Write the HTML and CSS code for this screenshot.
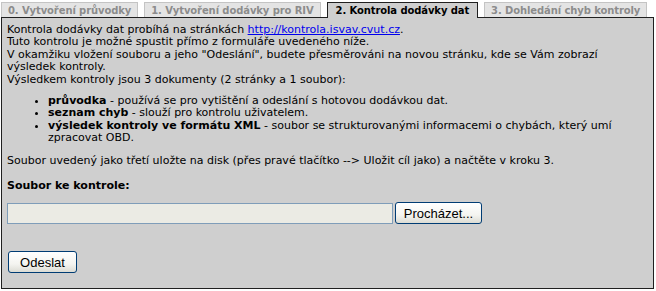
FILE: index.html
```html
<!DOCTYPE html>
<html lang="cs">
  <head>
    <meta charset="UTF-8" />
    <title>Kontrola dodávky dat</title>
    <link rel="stylesheet" href="styles.css">
  </head>
  <body>
    <div class="wizard">
      <ul class="tabs">
        <li class="tab">0. Vytvoření průvodky</li>
        <li class="tab">1. Vytvoření dodávky pro RIV</li>
        <li class="tab active">2. Kontrola dodávky dat</li>
        <li class="tab">3. Dohledání chyb kontroly</li>
      </ul>
      <div class="panel">
        <p class="intro">
          Kontrola dodávky dat probíhá na stránkách <a href="#">http://kontrola.isvav.cvut.cz</a>.<br />
          Tuto kontrolu je možné spustit přímo z formuláře uvedeného níže.<br />
          V okamžiku vložení souboru a jeho "Odeslání", budete přesměrováni na novou stránku, kde se Vám zobrazí
          výsledek kontroly.<br />
          Výsledkem kontroly jsou 3 dokumenty (2 stránky a 1 soubor):
        </p>
        <ul class="docs">
          <li><b>průvodka</b> - používá se pro vytištění a odeslání s hotovou dodávkou dat.</li>
          <li><b>seznam chyb</b> - slouží pro kontrolu uživatelem.</li>
          <li><b>výsledek kontroly ve formátu XML</b> - soubor se strukturovanými informacemi o chybách, který umí zpracovat OBD.</li>
        </ul>
        <p class="note">Soubor uvedený jako třetí uložte na disk (přes pravé tlačítko --&gt; Uložit cíl jako) a načtěte v kroku 3.</p>
        <form class="upload">
          <label class="upload-label">Soubor ke kontrole:</label>
          <div class="file-row">
            <span class="file-box"></span>
            <button type="button" class="xp-btn browse">Procházet...</button>
          </div>
          <button type="button" class="xp-btn submit">Odeslat</button>
        </form>
      </div>
    </div>
  </body>
</html>
```

FILE: styles.css
```css
body {
  margin: 0;
  background: #ffffff;
  font-family: "DejaVu Sans", Verdana, sans-serif;
  font-size: 11px;
  line-height: 12.4px;
  color: #000000;
}
.wizard {
  padding: 2px 2px 0 1px;
}
.tabs {
  display: flex;
  gap: 6px;
  margin: 0;
  padding: 0;
  list-style: none;
}
.tab {
  padding: 0 6px;
  height: 14px;
  line-height: 15px;
  font-size: 10px;
  letter-spacing: -0.1px;
  font-weight: bold;
  color: #8c8c8c;
  background: #e4e4e4;
  border: 1px solid #c4c4c4;
  border-bottom: none;
  white-space: nowrap;
}
.tab.active {
  color: #000000;
  background: #cfcfcf;
  border-color: #202020;
  position: relative;
  z-index: 1;
  height: 15px;
  margin-bottom: -1px;
  padding: 0 8px;
}
.panel {
  background: #cfcfcf;
  border: 1px solid #202020;
  padding: 6px 5px 15px 5px;
  box-sizing: border-box;
  height: 272px;
}
.intro {
  margin: 0;
}
.intro a {
  color: #0000ee;
}
.docs {
  margin: 9px 0 0 0;
  padding-left: 41px;
}
.docs li {
  list-style: disc;
}
.note {
  margin: 10px 0 0 0;
}
.upload {
  margin-top: 13px;
}
.upload-label {
  display: block;
  font-weight: bold;
}
.file-row {
  display: flex;
  align-items: center;
  gap: 2px;
  margin-top: 10px;
}
.file-box {
  display: block;
  width: 384px;
  height: 19px;
  background: #ebebe4;
  border: 1px solid #7f9db9;
}
.xp-btn {
  font-family: "Liberation Sans", Arial, sans-serif;
  font-size: 13px;
  color: #000000;
  background: linear-gradient(#ffffff, #f4f4f0 60%, #dcdcd4);
  border: 1px solid #003c74;
  border-radius: 3px;
  padding: 0;
  height: 22px;
}
.browse {
  width: 87px;
}
.submit {
  display: block;
  width: 69px;
  margin-top: 27px;
  margin-left: 1px;
}
```
